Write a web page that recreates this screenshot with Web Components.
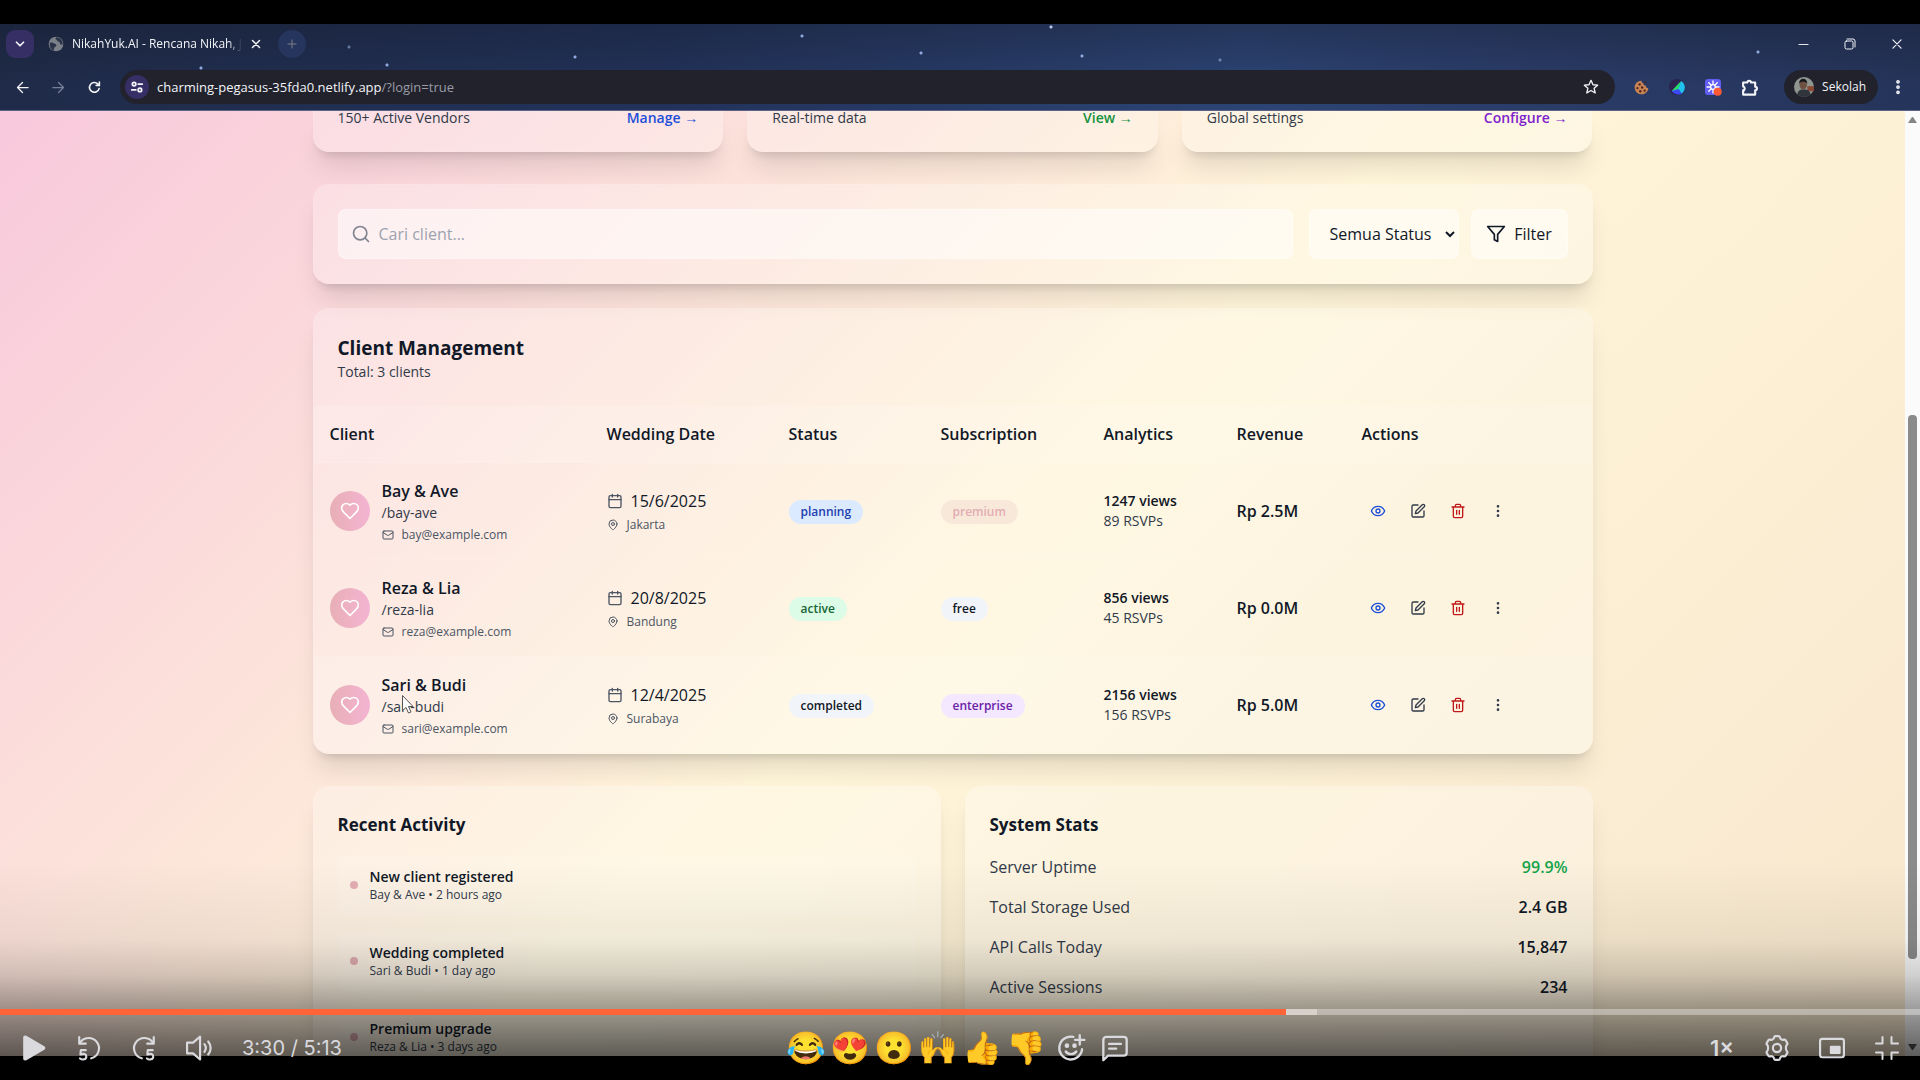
<!DOCTYPE html>
<html lang="id">
<head>
<meta charset="utf-8">
<title>NikahYuk.AI - Rencana Nikah</title>
<style>
  html, body {
    height: 100%;
    margin: 0;
  }
  body {
    background: #000;
    color: #111827;
    font: 16px/24px "Open Sans", "Noto Sans", sans-serif;
    overflow: hidden;
  }
</style>
</head>
<body>
<video-stage></video-stage>

<script>
  const ICONS = {
    search: '<circle cx="11" cy="11" r="8"/><path d="m21 21-4.3-4.3"/>',
    filter: '<polygon points="22 3 2 3 10 12.46 10 19 14 21 14 12.46 22 3"/>',
    heart: '<path d="M19 14c1.49-1.46 3-3.21 3-5.5A5.5 5.5 0 0 0 16.5 3c-1.76 0-3 .5-4.5 2-1.5-1.5-2.74-2-4.5-2A5.5 5.5 0 0 0 2 8.500c0 2.300 1.500 4.050 3 5.500l7 7Z"/>',
    mail: '<rect width="20" height="16" x="2" y="4" rx="2"/><path d="m22 7-8.970 5.700a1.940 1.940 0 0 1-2.060 0L2 7"/>',
    calendar: '<path d="M8 2v4M16 2v4"/><rect width="18" height="18" x="3" y="4" rx="2"/><path d="M3 10h18"/>',
    pin: '<path d="M20 10c0 6-8 12-8 12s-8-6-8-12a8 8 0 0 1 16 0Z"/><circle cx="12" cy="10" r="3"/>',
    eye: '<path d="M2 12s3-7 10-7 10 7 10 7-3 7-10 7-10-7-10-7Z"/><circle cx="12" cy="12" r="3"/>',
    edit: '<path d="M12 3H5a2 2 0 0 0-2 2v14a2 2 0 0 0 2 2h14a2 2 0 0 0 2-2v-7"/><path d="M18.375 2.625a2.121 2.121 0 1 1 3 3L12 15l-4 1 1-4Z"/>',
    trash: '<path d="M3 6h18M19 6v14c0 1-1 2-2 2H7c-1 0-2-1-2-2V6M8 6V4c0-1 1-2 2-2h4c1 0 2 1 2 2v2M10 11v6M14 11v6"/>',
    more: '<circle cx="12" cy="12" r="1"/><circle cx="12" cy="5" r="1"/><circle cx="12" cy="19" r="1"/>',
    chevron: '<path d="m6 9 6 6 6-6"/>',
    close: '<path d="M5 5l14 14M19 5 5 19"/>',
    plus: '<path d="M12 4v16M4 12h16"/>',
    back: '<path d="M21 12H4M12 4l-8 8 8 8"/>',
    forward: '<path d="M3 12h17M12 4l8 8-8 8"/>',
    reload: '<path d="M20.500 14A9 9 0 1 1 18 5.200l3 2.800"/><path d="M21 2v6h-6"/>',
    tune: '<circle cx="7" cy="7" r="3"/><path d="M14 7h7M3 17h7"/><circle cx="17" cy="17" r="3"/>',
    star: '<path d="m12 2 3 6.600 7 .700-5.300 4.700 1.600 7-6.300-3.700-6.300 3.700 1.600-7L2 9.300l7-.700Z"/>',
    globe: '<circle cx="12" cy="12" r="11" fill="#7c8088" stroke="none"/><path d="M3 10c4-1 5 1 8 2s1 4-1 5-1 4-1 5C4 20 2 15 3 10ZM12 2c-2 3 1 3 2 5s4 1 4 4 3 1 4 3c1-6-3-12-10-12Z" fill="#2b3349" stroke="none"/>',
    minimize: '<path d="M2 12h20"/>',
    restore: '<rect x="2" y="6" width="16" height="16" rx="3"/><path d="M6 2h12a4 4 0 0 1 4 4v12"/>',
    puzzle: '<path d="M3 5h6a2.500 2.500 0 0 1 5 0h6v6a2.500 2.500 0 0 1 0 5v6H3v-6a2.800 2.800 0 0 0 0-5.500Z"/>',
    cookie: '<path d="M12 1a11 11 0 1 0 11 12c-3 0-4-2-4-4-3 0-4-2-4-4-2 0-3-2-3-4Z" fill="#c98455" stroke="none"/><g fill="#4a2417" stroke="none"><circle cx="9" cy="7" r="1.900"/><circle cx="5.500" cy="13" r="1.700"/><circle cx="13" cy="12" r="1.900"/><circle cx="10" cy="18" r="1.900"/><circle cx="17" cy="17" r="1.800"/><circle cx="18" cy="4" r="1.500"/></g>',
    prism: '<circle cx="12" cy="12" r="12" fill="#2b2250" stroke="none"/><path d="M18 3 4 18h10Z" fill="#2bd96b" stroke="none"/><path d="M18 3c8 5 7 14 1 19l-5-7Z" fill="#1fc3ee" stroke="none"/><path d="M4 18l10-3 5 7c-5 3-11 1-15-4Z" fill="#3a49f5" stroke="none"/>',
    loom: '<rect width="24" height="24" rx="5" fill="#625df5" stroke="none"/><g stroke="#fff" stroke-width="2"><path d="M12 3v18M3 12h18M5.600 5.600l12.800 12.800M18.400 5.600 5.600 18.400"/></g><circle cx="12" cy="12" r="3.500" fill="#625df5" stroke="#fff"/><circle cx="19" cy="19" r="6" fill="#ff5a36" stroke="none"/>',
    face: '<circle cx="12" cy="12" r="12" fill="#8f9690" stroke="none"/><path d="M16 11h8v6h-8Z" fill="#8a4a34" stroke="none"/><path d="M4 21c1-6 4-6 8-6s7 1 8 6a12 12 0 0 1-16 0Z" fill="#30353b" stroke="none"/><ellipse cx="11" cy="9" rx="4.500" ry="6" fill="#6f5144" stroke="none"/><path d="M6 8c0-8 10-8 10 0-2-3-8-3-10 0Z" fill="#16181c" stroke="none"/>',
    play: '<path d="M2 2.500c0-2 1.500-2.500 3-1.700l16.500 9.500c1.300.900 1.300 2.500 0 3.400L5 23.200c-1.500.800-3 .300-3-1.700Z" fill="currentColor" stroke="none"/>',
    replay: '<path d="M3 2v6h6"/><path d="M3.500 7.500A9.500 9.500 0 1 1 14 21.500"/><path d="M9 14H4.500l-.4 4c3-1.300 5.400-.500 5.400 2s-3.500 3.500-5.800 1.700"/>',
    skip: '<path d="M21 2v6h-6"/><path d="M20.500 7.500A9.500 9.500 0 1 0 10 21.500"/><path d="M20 14h-4.500l-.4 4c3-1.300 5.400-.500 5.400 2s-3.500 3.500-5.800 1.700"/>',
    volume: '<path d="M13 1.500v21L6.500 17H1V7h5.500Z"/><path d="M17 8.500c1.500 2 1.500 5 0 7M20.500 6c3 3.500 3 8.500 0 12"/>',
    react: '<path d="M14 2.500A9.800 9.800 0 1 0 21.500 13"/><path d="M19.500 1v8M15.500 5h8"/><path d="M7.500 15c2 3 7 3 9 0"/><circle cx="8.500" cy="10" r="1" fill="currentColor"/><circle cx="15" cy="10" r="1" fill="currentColor"/>',
    comment: '<path d="M2 22.500V5a2.500 2.500 0 0 1 2.500-2.500h15A2.500 2.500 0 0 1 22 5v11a2.500 2.500 0 0 1-2.500 2.500H6Z"/><path d="M7 8.500h10M7 12.500h6"/>',
    gear: '<path d="M10.500 1h3c.8 0 1 .5 1.200 1.200.4 1.700 1.800 2.600 3.500 2.100.8-.2 1.300-.2 1.700.4l1.600 2.800c.4.700.1 1.100-.4 1.600-1.200 1.200-1.200 4.600 0 5.800.5.500.8.900.4 1.600l-1.600 2.800c-.4.600-.9.600-1.700.4-1.700-.5-3.100.4-3.500 2.100-.2.700-.4 1.200-1.200 1.200h-3c-.8 0-1-.5-1.200-1.200-.4-1.700-1.800-2.600-3.500-2.100-.8.200-1.300.2-1.700-.4l-1.600-2.800c-.4-.7-.1-1.100.4-1.600 1.200-1.200 1.200-4.600 0-5.800-.5-.5-.8-.9-.4-1.600l1.600-2.800c.4-.6.900-.6 1.700-.4 1.700.5 3.100-.4 3.500-2.100.2-.7.400-1.200 1.200-1.200Z"/><circle cx="12" cy="12" r="3.800"/>',
    pip: '<rect x="1" y="3.500" width="22" height="17" rx="2"/><rect x="11" y="11" width="8" height="5.500" fill="currentColor"/>',
    shrink: '<path d="M7.500 1v6.500H1M16.500 1v6.500H23M1 16.500h6.500V23M23 16.500h-6.500V23"/>'
  };

  // Shared by every element below: open shadow root filled from a string
  class BaseElement extends HTMLElement {
    constructor() {
      super();
      this.root = this.attachShadow({ mode: "open" });
    }
    connectedCallback() {
      this.root.innerHTML = this.render();
    }
  }

  class UiIcon extends BaseElement {
    render() {
      let size = this.getAttribute('size') || 16;
      let stroke = this.getAttribute('stroke') || 2;
      return `
      <style>
        :host { display: inline-block; flex: none; width: ${size}px; height: ${size}px; }
        svg { display: block; overflow: visible; }
      </style>
      <svg width="${size}" height="${size}" viewBox="0 0 24 24" fill="none" stroke="currentColor"
        stroke-width="${stroke}" stroke-linecap="round" stroke-linejoin="round" aria-hidden="true">${ICONS[this.getAttribute('name')]}</svg>`;
    }
  }
  customElements.define("ui-icon", UiIcon);

  class BrowserBar extends BaseElement {
    render() {
      return `
      <style>
        :host {
          display: flex;
          flex-direction: column;
          box-sizing: border-box;
          height: 87px;
          color: #f3f4f8;
          border-bottom: 1px solid #5b6486;
          background:
            radial-gradient(circle at 201px 44px, #8fa9df 1px, transparent 2px),
            radial-gradient(circle at 349px 23px, #5f769f 1px, transparent 2px),
            radial-gradient(circle at 387px 41px, #8fa9df 1px, transparent 2px),
            radial-gradient(circle at 575px 33px, #8fa9df 1px, transparent 2px),
            radial-gradient(circle at 802px 12px, #8fa9df 1px, transparent 2px),
            radial-gradient(circle at 921px 29px, #8fa9df 1px, transparent 2px),
            radial-gradient(circle at 1051px 3px, #b7c9ee 1px, transparent 2px),
            radial-gradient(circle at 1082px 32px, #8fa9df 1px, transparent 2px),
            radial-gradient(circle at 1220px 36px, #6d84b4 1px, transparent 2px),
            radial-gradient(circle at 1758px 28px, #8fa9df 1px, transparent 2px),
            linear-gradient(rgba(20, 24, 38, .35), transparent 70%),
            linear-gradient(90deg, #1f2b48, #22325a 35%, #2c4474 65%, #2a3c68 80%, #25345a);
        }
        .tabs, .tools { display: flex; align-items: center; }
        .tabs { height: 40px; padding: 0 11px 0 6px; }
        .tools { box-sizing: border-box; height: 46px; padding: 6px 14px 0 10px; gap: 12px; align-items: flex-start; }
        button {
          display: flex; align-items: center; justify-content: center;
          flex: none; width: 24px; height: 34px; padding: 0;
          border: 0; background: none; color: inherit; font: inherit;
        }
        .menu { width: 28px; height: 28px; border-radius: 9px; background: #352f66; }
        .tab { display: flex; align-items: center; gap: 8px; margin-left: 14px; font-size: 12px; line-height: 16px; }
        .title {
          width: 170px; overflow: hidden; white-space: nowrap;
          -webkit-mask-image: linear-gradient(90deg, #000 92%, transparent);
        }
        .new { width: 28px; height: 28px; margin-left: 16px; border-radius: 14px; background: #26355d; color: #7b8088; }
        .window { display: flex; gap: 23px; margin-left: auto; }
        .dim { color: #76809a; }
        .omnibox {
          display: flex; align-items: center; flex: 1; gap: 8px; height: 34px;
          margin: 0 2px; padding: 0 12px 0 5px; box-sizing: border-box;
          border-radius: 17px; background: #21222c; line-height: 20px;
        }
        .site { display: flex; align-items: center; justify-content: center; width: 24px; height: 24px; border-radius: 12px; background: #352f66; }
        .url { flex: 1; color: #f3f4f8; text-decoration: none; font-size: 13px; }
        .url span { color: #9a9ca6; }
        .profile { width: auto; gap: 8px; margin: 0 0 0 11px; padding: 0 12px 0 10px; border-radius: 17px; background: #21222c; font-size: 12px; }
        .dots { width: 16px; }
      </style>
      <div class="tabs">
        <button class="menu"><ui-icon name="chevron" size="14" stroke="3"></ui-icon></button>
        <div class="tab">
          <ui-icon name="globe" size="16"></ui-icon>
          <span class="title">NikahYuk.AI - Rencana Nikah, Ja</span>
          <ui-icon name="close" size="12" stroke="3"></ui-icon>
        </div>
        <button class="new"><ui-icon name="plus" size="12"></ui-icon></button>
        <div class="window">
          <button><ui-icon name="minimize" size="11"></ui-icon></button>
          <button><ui-icon name="restore" size="12"></ui-icon></button>
          <button><ui-icon name="close" size="14"></ui-icon></button>
        </div>
      </div>
      <div class="tools">
        <button><ui-icon name="back" size="15"></ui-icon></button>
        <button class="dim"><ui-icon name="forward" size="15"></ui-icon></button>
        <button><ui-icon name="reload" size="13" stroke="3"></ui-icon></button>
        <div class="omnibox">
          <span class="site"><ui-icon name="tune" size="14" stroke="3"></ui-icon></span>
          <a class="url" href="#">charming-pegasus-35fda0.netlify.app<span>/?login=true</span></a>
          <button><ui-icon name="star" size="16"></ui-icon></button>
        </div>
        <button><ui-icon name="cookie" size="15"></ui-icon></button>
        <button><ui-icon name="prism" size="16"></ui-icon></button>
        <button><ui-icon name="loom" size="16"></ui-icon></button>
        <button><ui-icon name="puzzle" size="17" stroke="3"></ui-icon></button>
        <button class="profile"><ui-icon name="face" size="20"></ui-icon>Sekolah</button>
        <button class="dots"><ui-icon name="more" size="18" stroke="3"></ui-icon></button>
      </div>`;
    }
  }
  customElements.define("browser-bar", BrowserBar);

  class GlassCard extends BaseElement {
    render() {
      return `
      <style>
        :host {
          display: block;
          box-sizing: border-box;
          padding: 24px;
          border: 1px solid rgba(255, 255, 255, .3);
          border-radius: 16px;
          background: rgba(255, 255, 255, .25);
          background-clip: padding-box;
          box-shadow: 0 20px 25px -5px rgba(0, 0, 0, .1), 0 8px 10px -6px rgba(0, 0, 0, .14);
        }
        :host([flush]) { padding: 25px 0 0; overflow: hidden; }
        :host([cut]) { padding: 0 24px 26px; border-top: 0; border-radius: 0 0 16px 16px; }
      </style>
      <slot></slot>`;
    }
  }
  customElements.define("glass-card", GlassCard);

  class QuickLinks extends BaseElement {
    render() {
      let links = [
        ['150+ Active Vendors', 'Manage →', '#1d4ed8'],
        ['Real-time data', 'View →', '#15923f'],
        ['Global settings', 'Configure →', '#7e22ce']
      ];
      return `
      <style>
        :host { display: grid; grid-template-columns: repeat(3, 1fr); gap: 24px; }
        div { display: flex; justify-content: space-between; font-size: 14px; line-height: 14px; color: #303a49; }
        a { font-weight: 600; text-decoration: none; }
      </style>
      ${links.map(([label, action, color]) => `
        <glass-card cut><div><span>${label}</span><a href="#" style="color: ${color}">${action}</a></div></glass-card>`).join('')}`;
    }
  }
  customElements.define("quick-links", QuickLinks);

  class ClientFilter extends BaseElement {
    render() {
      return `
      <style>
        :host { display: block; }
        form { display: flex; gap: 12px; }
        label, select, button {
          box-sizing: border-box; height: 50px;
          border: 1px solid rgba(255, 255, 255, .3); border-radius: 8px;
          background: rgba(255, 255, 255, .5); font: inherit; color: #111827;
        }
        label { display: flex; align-items: center; flex: 1; gap: 8px; margin-right: 4px; padding: 0 12px; color: #808591; }
        input { flex: 1; min-width: 0; border: 0; padding: 0; background: none; font: inherit; outline: 0; }
        input::placeholder { color: #9ca3af; opacity: 1; }
        select { width: 150px; padding: 0 0 0 16px; }
        button { display: flex; align-items: center; justify-content: center; gap: 8px; width: 97px; padding: 0; }
      </style>
      <form>
        <label><ui-icon name="search" size="20"></ui-icon><input type="text" placeholder="Cari client..."></label>
        <select aria-label="Status"><option>Semua Status</option></select>
        <button type="button"><ui-icon name="filter" size="20"></ui-icon>Filter</button>
      </form>`;
    }
  }
  customElements.define("client-filter", ClientFilter);

  class StatusPill extends BaseElement {
    render() {
      return `
      <style>
        :host {
          display: inline-block; padding: 4px 12px; border-radius: 12px;
          background: #f1f4f9; color: #111827;
          font-size: 12px; line-height: 16px; font-weight: 600; vertical-align: middle;
        }
        :host([kind="planning"]) { background: #dbeafe; color: #1e40af; }
        :host([kind="active"]) { background: #dcfce7; color: #166534; }
        :host([kind="premium"]) { background: #f8e8da; color: #e3adb2; }
        :host([kind="enterprise"]) { background: #f3e8ff; color: #6b21a8; }
      </style>
      <slot></slot>`;
    }
  }
  customElements.define("status-pill", StatusPill);

  class ClientTable extends BaseElement {
    render() {
      let clients = [
        ['Bay & Ave', '/bay-ave', 'bay@example.com', '15/6/2025', 'Jakarta', 'planning', 'premium', 1247, 89, '2.5'],
        ['Reza & Lia', '/reza-lia', 'reza@example.com', '20/8/2025', 'Bandung', 'active', 'free', 856, 45, '0.0'],
        ['Sari & Budi', '/sari-budi', 'sari@example.com', '12/4/2025', 'Surabaya', 'completed', 'enterprise', 2156, 156, '5.0']
      ];
      return `
      <style>
        :host { display: block; }
        header { padding: 0 24px 24px; }
        h2 { margin: 0; font-size: 19px; line-height: 28px; font-weight: 700; }
        p { margin: 0; font-size: 14px; line-height: 20px; color: #303a49; }
        table { width: 100%; table-layout: fixed; border-collapse: collapse; }
        th, td { padding: 16px; text-align: left; border-bottom: 1px solid rgba(255, 255, 255, .1); }
        th { font-weight: 600; }
        td { height: 64px; }
        thead tr, tbody tr:last-child { background: rgba(255, 255, 255, .15); }
        tr:last-child td { border-bottom: 0; }
        .row { display: flex; align-items: center; gap: 8px; }
        .client { gap: 12px; }
        .avatar {
          display: flex; align-items: center; justify-content: center;
          width: 40px; height: 40px; border-radius: 20px;
          background: linear-gradient(90deg, #e8afb6, #f4b4d2); color: #fff;
        }
        .name, .money { font-weight: 600; }
        .slug, .views { font-size: 14px; line-height: 20px; color: #303a49; }
        .views b { display: block; font-weight: 600; color: #111827; }
        .small { margin-top: 4px; font-size: 12px; line-height: 16px; color: #4b5563; }
        .date ui-icon { color: #4b5563; }
        .actions button { display: flex; padding: 8px; border: 0; background: none; color: #303a49; }
        .actions .view { color: #1d4ed8; }
        .actions .delete { color: #c01818; }
      </style>
      <header>
        <h2>Client Management</h2>
        <p>Total: 3 clients</p>
      </header>
      <table>
        <colgroup>
          <col style="width: 277px"><col style="width: 182px"><col style="width: 152px"><col style="width: 163px">
          <col style="width: 133px"><col style="width: 125px"><col>
        </colgroup>
        <thead><tr>
          <th>Client</th><th>Wedding Date</th><th>Status</th><th>Subscription</th><th>Analytics</th><th>Revenue</th><th>Actions</th>
        </tr></thead>
        <tbody>${clients.map(([name, slug, mail, date, city, status, plan, views, rsvps, revenue]) => `
          <tr>
            <td><div class="row client">
              <span class="avatar"><ui-icon name="heart" size="20"></ui-icon></span>
              <div>
                <div class="name">${name.replace('&', '&amp;')}</div>
                <div class="slug">${slug}</div>
                <div class="row small"><ui-icon name="mail" size="12"></ui-icon>${mail}</div>
              </div>
            </div></td>
            <td>
              <div class="row date"><ui-icon name="calendar"></ui-icon>${date}</div>
              <div class="row small"><ui-icon name="pin" size="12"></ui-icon>${city}</div>
            </td>
            <td><status-pill kind="${status}">${status}</status-pill></td>
            <td><status-pill kind="${plan}">${plan}</status-pill></td>
            <td class="views"><b>${views} views</b>${rsvps} RSVPs</td>
            <td class="money">Rp ${revenue}M</td>
            <td><div class="row actions">
              <button class="view"><ui-icon name="eye"></ui-icon></button>
              <button><ui-icon name="edit"></ui-icon></button>
              <button class="delete"><ui-icon name="trash"></ui-icon></button>
              <button><ui-icon name="more"></ui-icon></button>
            </div></td>
          </tr>`).join('')}
        </tbody>
      </table>`;
    }
  }
  customElements.define("client-table", ClientTable);

  class RecentActivity extends BaseElement {
    render() {
      let items = [
        ['New client registered', 'Bay &amp; Ave • 2 hours ago'],
        ['Wedding completed', 'Sari &amp; Budi • 1 day ago'],
        ['Premium upgrade', 'Reza &amp; Lia • 3 days ago']
      ];
      return `
      <style>
        :host { display: block; }
        h3 { margin: 0 0 16px; font-size: 17px; line-height: 28px; font-weight: 700; }
        ul { display: grid; gap: 16px; margin: 0; padding: 0; list-style: none; }
        li { display: flex; align-items: center; gap: 12px; padding: 12px; border-radius: 8px; background: rgba(255, 255, 255, .12); }
        i { width: 8px; height: 8px; border-radius: 4px; background: #e3adb2; }
        b { display: block; font-size: 14px; line-height: 20px; font-weight: 600; }
        span { display: block; font-size: 12px; line-height: 16px; color: #303a49; }
      </style>
      <h3>Recent Activity</h3>
      <ul>${items.map(([title, note]) => `<li><i></i><div><b>${title}</b><span>${note}</span></div></li>`).join('')}</ul>`;
    }
  }
  customElements.define("recent-activity", RecentActivity);

  class SystemStats extends BaseElement {
    render() {
      let stats = [
        ['Server Uptime', '99.9%', 'good'],
        ['Total Storage Used', '2.4 GB', ''],
        ['API Calls Today', '15,847', ''],
        ['Active Sessions', '234', '']
      ];
      return `
      <style>
        :host { display: block; }
        h3 { margin: 0 0 16px; font-size: 17px; line-height: 28px; font-weight: 700; }
        dl { display: grid; gap: 16px; margin: 0; }
        div { display: flex; justify-content: space-between; }
        dt { color: #303a49; }
        dd { margin: 0; font-weight: 600; }
        .good { color: #15a34a; }
      </style>
      <h3>System Stats</h3>
      <dl>${stats.map(([label, value, kind]) => `<div><dt>${label}</dt><dd class="${kind}">${value}</dd></div>`).join('')}</dl>`;
    }
  }
  customElements.define("system-stats", SystemStats);

  class PageScrollbar extends BaseElement {
    render() {
      return `
      <style>
        :host { display: flex; flex-direction: column; align-items: center; width: 15px; padding: 5px 0; box-sizing: border-box; background: #fbfbfb; }
        svg { flex: none; }
        .before { flex: 290; }
        .thumb { flex: 543; width: 9px; border-radius: 4px; background: #8b8b8b; }
        .after { flex: 84; }
      </style>
      <svg width="9" height="8"><path d="M0 7 4 1h1l4 6Z" fill="#858585"/></svg>
      <span class="before"></span><span class="thumb"></span><span class="after"></span>
      <svg width="9" height="8"><path d="M0 1h9L5 7H4Z" fill="#555"/></svg>`;
    }
  }
  customElements.define("page-scrollbar", PageScrollbar);

  class AdminPage extends BaseElement {
    render() {
      return `
      <style>
        :host {
          display: flex;
          min-height: 0;
          overflow: hidden;
          background: linear-gradient(135deg, #f8c8dc, #fff5d9 50%, #f7e7ce);
        }
        main { flex: 1; display: flex; flex-direction: column; align-items: center; }
        .content { width: 100%; max-width: 1280px; }
        .search { margin: 32px 0 24px; }
        .pair { display: grid; grid-template-columns: 1fr 1fr; gap: 24px; margin-top: 32px; }
      </style>
      <main>
        <div class="content">
          <quick-links></quick-links>
          <glass-card class="search"><client-filter></client-filter></glass-card>
          <glass-card flush><client-table></client-table></glass-card>
          <div class="pair">
            <glass-card><recent-activity></recent-activity></glass-card>
            <glass-card><system-stats></system-stats></glass-card>
          </div>
        </div>
      </main>
      <page-scrollbar></page-scrollbar>`;
    }
  }
  customElements.define("admin-page", AdminPage);

  class PlayerControls extends BaseElement {
    render() {
      let reactions = ['😂', '😍', '😮', '🙌', '👍', '👎'];
      return `
      <style>
        :host {
          display: flex; flex-direction: column; justify-content: flex-end;
          height: 220px; color: #d9d9de;
          background: linear-gradient(transparent, rgba(0, 0, 0, .06) 36%, rgba(0, 0, 0, .17) 52%, rgba(0, 0, 0, .38) 68%, rgba(0, 0, 0, .64) 90%, rgba(0, 0, 0, .7));
        }
        .progress { height: 6px; background: linear-gradient(90deg, #ff6338 67%, #d6d2cb 67%, #d6d2cb 68.6%, rgba(255, 255, 255, .35) 68.6%); }
        .bar { display: grid; grid-template-columns: 1fr auto 1fr; align-items: center; height: 65px; padding: 0 13px 0 14px; }
        .group { display: flex; align-items: center; gap: 15px; }
        .middle { gap: 4px; }
        .right { justify-content: flex-end; }
        button {
          display: flex; align-items: center; justify-content: center;
          width: 40px; height: 40px; padding: 0; border: 0; background: none; color: inherit;
          font: 600 22px/32px Inter, sans-serif;
        }
        .middle button { font: 32px/40px "Noto Color Emoji", sans-serif; }
        time { margin-left: 8px; font: 20px/32px Inter, sans-serif; }
      </style>
      <div class="progress"></div>
      <div class="bar">
        <div class="group">
          <button><ui-icon name="play" size="26"></ui-icon></button>
          <button><ui-icon name="replay" size="26"></ui-icon></button>
          <button><ui-icon name="skip" size="26"></ui-icon></button>
          <button><ui-icon name="volume" size="26"></ui-icon></button>
          <time>3:30 / 5:13</time>
        </div>
        <div class="group middle">
          ${reactions.map(face => `<button>${face}</button>`).join('')}
          <button><ui-icon name="react" size="28"></ui-icon></button>
          <button><ui-icon name="comment" size="28"></ui-icon></button>
        </div>
        <div class="group right">
          <button>1×</button>
          <button><ui-icon name="gear" size="26"></ui-icon></button>
          <button><ui-icon name="pip" size="26"></ui-icon></button>
          <button><ui-icon name="shrink" size="24"></ui-icon></button>
        </div>
      </div>`;
    }
  }
  customElements.define("player-controls", PlayerControls);

  class VideoStage extends BaseElement {
    render() {
      return `
      <style>
        :host { display: flex; flex-direction: column; box-sizing: border-box; height: 100vh; padding: 24px 0; position: relative; }
        admin-page { flex: 1; }
        /* controls and the mouse pointer float over the video */
        player-controls { position: absolute; left: 0; right: 0; bottom: 0; }
        .pointer { position: absolute; left: 402px; top: 695px; }
      </style>
      <browser-bar></browser-bar>
      <admin-page></admin-page>
      <svg class="pointer" width="12" height="19" viewBox="0 0 12 19"><path d="M.5.500v15l3.500-3 2.500 5.500 2.500-1-2.500-5.500h4.500Z" fill="#fff" stroke="#555"/></svg>
      <player-controls></player-controls>`;
    }
  }
  customElements.define("video-stage", VideoStage);
</script>
</body>
</html>
